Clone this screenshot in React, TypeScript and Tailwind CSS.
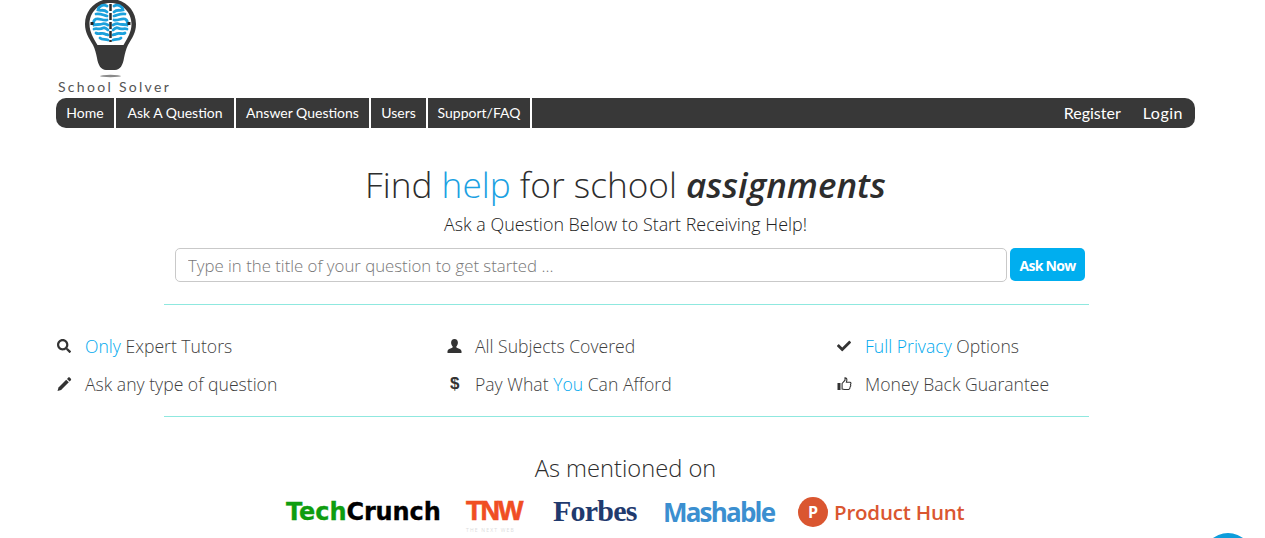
import React from "react";
import { FaSearch, FaCheck } from "react-icons/fa";

const navLinks = [
    { label: "Home", width: "w-[60px]" },
    { label: "Ask A Question", width: "w-[120px]" },
    { label: "Answer Questions", width: "w-[135px]" },
    { label: "Users", width: "w-[57px]" },
    { label: "Support/FAQ", width: "w-[104px]" },
];

function BrainHalf() {
    return (
        <g fill="none" stroke="#1ba1dc" strokeWidth="2.8" strokeLinecap="round">
            <path d="M24 6C20 4 16 6 15 10C18 11 21 9 24 12" />
            <path d="M13 14C17 13 20 15 24 16" />
            <path d="M24 20C20 21 17 18 13 19C11 20 10 22 11 25C14 24 16 25 19 24C21 23 23 24 25 25" />
            <path d="M11 29C14 28 17 30 20 28C22 27 24 29 25 30" />
            <path d="M13 33C16 35 19 32 22 34C23 35 24 34 25 35" />
            <path d="M17 38C19 40 22 39 25 40" />
        </g>
    );
}

function Logo() {
    return (
        <svg width="55" height="78" viewBox="0 0 55 78" className="block">
            {/* bulb */}
            <path d="M27.5 -1C13 -1 2 10 2 24c0 9 4 14 8 21 2 4 3 8 4 13 1 7 4 12 9 12h9c5 0 8-5 9-12 1-5 2-9 4-13 4-7 8-12 8-21C53 10 42 -1 27.5 -1z" fill="#383838" />
            <path d="M27.5 3C15 3 6.500 13 6.500 24c0 8 4 14 8 21h26c4-7 8-13 8-21C48.500 13 40 3 27.500 3z" fill="#fff" />
            {/* brain */}
            <BrainHalf />
            <g transform="translate(55,0) scale(-1,1)">
                <BrainHalf />
            </g>
            <path d="M27.500 4v38" stroke="#2b2b2b" strokeWidth="2.500" strokeDasharray="7 2" />
            <rect x="7.500" y="22" width="3" height="3" fill="#222" />
            <rect x="44.500" y="22" width="3" height="3" fill="#222" />
            {/* shadow under bulb */}
            <ellipse cx="27.500" cy="76" rx="10.500" ry="1.200" fill="#8a8a8a" />
        </svg>
    );
}

function UserIcon() {
    return (
        <svg width="15" height="14" viewBox="0 0 14 14" fill="currentColor">
            <path d="M7 0c2.200 0 3.400 1.600 3.400 3.600 0 1.600-.7 3-1.600 3.900 0 .8.2 1.200 1 1.600 1.600.7 3.700 1.300 4.200 2.900v2H0v-2c.5-1.600 2.600-2.200 4.200-2.900.8-.4 1-.8 1-1.600-.9-.9-1.600-2.300-1.600-3.900C3.600 1.600 4.800 0 7 0z" />
        </svg>
    );
}

function PencilIcon() {
    return (
        <svg width="15" height="14" viewBox="0 0 14 14" fill="currentColor">
            <path d="M0 14l1-3.600L8.700 2.700l2.600 2.600L3.600 13z" />
            <path d="M9.500 1.900l1.300-1.300c.4-.4 1-.4 1.400 0l1.200 1.200c.4.4.4 1 0 1.400l-1.300 1.300z" />
        </svg>
    );
}

function ThumbIcon() {
    return (
        <svg width="15" height="14" viewBox="0 0 14 14">
            <rect x="0" y="6" width="3" height="7" fill="currentColor" />
            <path d="M4.600 6.500L7.500 3.200V.9C9 .9 9.600 2 9.300 3.500L8.900 5.300H12.500C13.600 5.300 13.700 6.900 13 7.400C13.500 8.400 13.200 9.400 12.600 9.900C12.700 11 12.200 12 11.300 12.500H7L4.600 12Z" fill="none" stroke="currentColor" strokeWidth="1.100" />
        </svg>
    );
}

function Feature({ icon, children }: { icon: React.ReactNode; children: React.ReactNode }) {
    return (
        <div className="flex items-center h-[38px] text-[17.600px] text-[#3f3f3f] font-light">
            <span className="w-[29px] flex items-center pl-[1px] text-[#333]">{icon}</span>
            <span>{children}</span>
        </div>
    );
}

export default function App() {
    return (
        <div className="relative h-[538px] overflow-hidden bg-white font-['Open_Sans',sans-serif]">
            <div className="ml-[56px] w-[1139px]">
                {/* Logo */}
                <div className="h-[98px] flex flex-col">
                    <div className="ml-[27px]">
                        <Logo />
                    </div>
                    <div className="ml-[2px] mt-[1px] text-[14px] leading-[16px] tracking-[2.300px] text-[#555] font-['Lato',sans-serif]">School Solver</div>
                </div>

                {/* Nav */}
                <nav className="flex h-[30px] items-stretch justify-between rounded-[10px] bg-[#383838] font-['Lato',sans-serif] text-white">
                    <ul className="flex">
                        {navLinks.map((l) => (
                            <li key={l.label} className={`${l.width} flex items-center justify-center border-r-2 border-white pb-[1px] text-[14px]`}>
                                {l.label}
                            </li>
                        ))}
                    </ul>
                    <div className="flex items-center gap-[22px] pr-[12px] text-[16px]">
                        <span>Register</span>
                        <span className="tracking-[0.500px]">Login</span>
                    </div>
                </nav>

                {/* Hero */}
                <div className="mt-[34px] text-center">
                    <h1 className="text-[35.200px] leading-[44px] text-[#2d2d2d] font-light">
                        Find <span className="text-[#1ba1e2]">help</span> for school <span className="text-[35px] font-semibold italic">assignments</span>
                    </h1>
                    <p className="mt-[5px] text-[17.900px] leading-[24px] font-light text-[#222]">Ask a Question Below to Start Receiving Help!</p>
                </div>

                {/* Search */}
                <div className="mt-[12px] ml-[119px] flex items-start gap-[3px]">
                    <input
                        type="text"
                        placeholder="Type in the title of your question to get started ..."
                        className="h-[34px] w-[832px] rounded-[5px] border border-[#c9c9c9] px-[12px] text-[16.800px] font-light outline-none placeholder:text-[#777]"
                    />
                    <button className="h-[33px] w-[75px] rounded-[5px] bg-[#00aeef] pt-[1px] text-[14px] font-bold tracking-[-0.700px] text-white">Ask Now</button>
                </div>

                <div className="mt-[22px] ml-[108px] h-px w-[925px] bg-[#8fe8df]" />

                {/* Features */}
                <div className="mt-[22px] grid grid-cols-[390px_390px_1fr]">
                    <div>
                        <Feature icon={<FaSearch size={14} />}><span className="text-[#00a8ee]">Only</span> Expert Tutors</Feature>
                        <Feature icon={<PencilIcon />}>Ask any type of question</Feature>
                    </div>
                    <div>
                        <Feature icon={<UserIcon />}>All Subjects Covered</Feature>
                        <Feature icon={<span className="ml-[3px] font-['Liberation_Sans',sans-serif] text-[17px] font-bold">$</span>}>Pay What <span className="text-[#00a8ee]">You</span> Can Afford</Feature>
                    </div>
                    <div>
                        <Feature icon={<FaCheck size={14} />}><span className="text-[#00a8ee]">Full Privacy</span> Options</Feature>
                        <Feature icon={<ThumbIcon />}>Money Back Guarantee</Feature>
                    </div>
                </div>

                <div className="mt-[13px] ml-[108px] h-px w-[925px] bg-[#8fe8df]" />

                {/* Mentions */}
                <div className="mt-[37px] text-center text-[23.700px] leading-[28px] text-[#2d2d2d] font-light">As mentioned on</div>
                <div className="mt-[12px] ml-[230px] flex h-[36px] items-center">
                    <span className="w-[180px] font-['DejaVu_Sans',sans-serif] text-[24px] font-bold tracking-[-0.100px] text-black [-webkit-text-stroke:0.300px_currentColor]">
                        <span className="text-[#0f9d0f]">Tech</span>Crunch
                    </span>
                    <span className="flex w-[87px] flex-col pt-[10px]">
                        <span className="font-['Liberation_Sans',sans-serif] text-[27px] leading-[20px] font-bold tracking-[-2px] text-[#f04e23] [-webkit-text-stroke:0.600px_#f04e23]">TNW</span>
                        <span className="mt-[6px] text-[5px] leading-[6px] tracking-[1.200px] text-[#ddd]">THE NEXT WEB</span>
                    </span>
                    <span className="w-[110px] pb-[3px] font-['Liberation_Serif',serif] text-[30px] font-bold tracking-[-0.800px] text-[#1f3a6e]">Forbes</span>
                    <span className="w-[135px] pt-[1px] text-[26px] font-bold tracking-[-1.800px] text-[#3b8fd0]">Mashable</span>
                    <span className="flex h-[30px] w-[30px] items-center justify-center rounded-full bg-[#da5630] text-[16px] font-bold text-white">P</span>
                    <span className="ml-[6px] text-[20.500px] font-semibold tracking-[-0.200px] text-[#da5630]">Product Hunt</span>
                </div>
            </div>

            {/* Chat bubble */}
            <div className="absolute left-[1203px] top-[533px] h-[50px] w-[50px] rounded-full bg-[#0d9ddb]" />
        </div>
    );
}
